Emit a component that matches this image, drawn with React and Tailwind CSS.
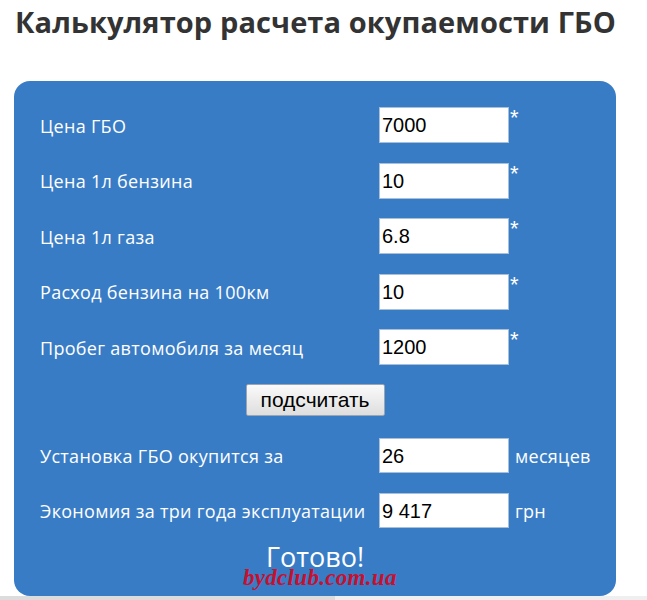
import React from "react";

const rows = [
  ["Цена ГБО", "7000"],
  ["Цена 1л бензина", "10"],
  ["Цена 1л газа", "6.8"],
  ["Расход бензина на 100км", "10"],
  ["Пробег автомобиля за месяц", "1200"],
];

function Field({ value, h }) {
  return (
    <div className={`w-[130px] ${h} bg-white border border-[#a8bfd9] flex items-center pl-[2px] text-[20px] text-black font-['Liberation_Sans',Arial,sans-serif]`}>
      {value}
    </div>
  );
}

export default function App() {
  return (
    <div className="w-[647px] h-[600px] bg-white overflow-hidden flex flex-col font-['Open_Sans','DejaVu_Sans',sans-serif]">
      <h1 className="pl-[15px] pt-[2px] h-[81px] text-[29px] font-bold text-[#333333] leading-[40px] tracking-[0.1px]">
        Калькулятор расчета окупаемости ГБО
      </h1>
      <div className="relative ml-[14px] w-[602px] h-[515px] bg-[#397cc6] rounded-[16px] pt-[26px] pl-[26px] text-white">
        <div className="flex flex-col gap-[19.5px]">
          {rows.map(([label, value]) => (
            <div key={label} className="flex items-center h-[36px]">
              <div className="w-[339px] text-[18px] tracking-[0.3px] pt-[2px]">{label}</div>
              <Field value={value} h="h-[36px]" />
              <div className="self-start ml-[1px] text-[22px] leading-[22px] font-['Liberation_Sans',Arial,sans-serif]">*</div>
            </div>
          ))}
        </div>
        <div className="flex justify-center pr-[26px] mt-[19px]">
          <button className="w-[139px] h-[32px] border border-[#9aa6b4] rounded-[2px] bg-gradient-to-b from-[#fafafa] to-[#dedede] text-[21px] leading-[30px] text-black font-['Liberation_Sans',Arial,sans-serif]">
            подсчитать
          </button>
        </div>
        <div className="flex flex-col gap-[20px] mt-[22px]">
          {[
            ["Установка ГБО окупится за", "26", "месяцев"],
            ["Экономия за три года эксплуатации", "9 417", "грн"],
          ].map(([label, value, unit]) => (
            <div key={label} className="flex items-center h-[35px]">
              <div className="w-[339px] text-[18px] tracking-[0.3px] pt-[2px]">{label}</div>
              <Field value={value} h="h-[35px]" />
              <div className="ml-[6px] text-[18px] tracking-[0.3px] pt-[2px]">{unit}</div>
            </div>
          ))}
        </div>
        <div className="flex justify-center pr-[26px] mt-[11px] text-[27px] leading-[36px]">Готово!</div>
        <div className="absolute left-[229px] top-[480px] text-[23px] font-bold italic text-[#c8102e] font-['Liberation_Serif','Times_New_Roman',serif] tracking-[0.3px]">
          bydclub.com.ua
        </div>
      </div>
      <div className="mt-auto h-[4px] flex">
        <div className="w-[335px] bg-[#dcdcdc]" />
        <div className="flex-1 bg-[#efefef]" />
      </div>
    </div>
  );
}
